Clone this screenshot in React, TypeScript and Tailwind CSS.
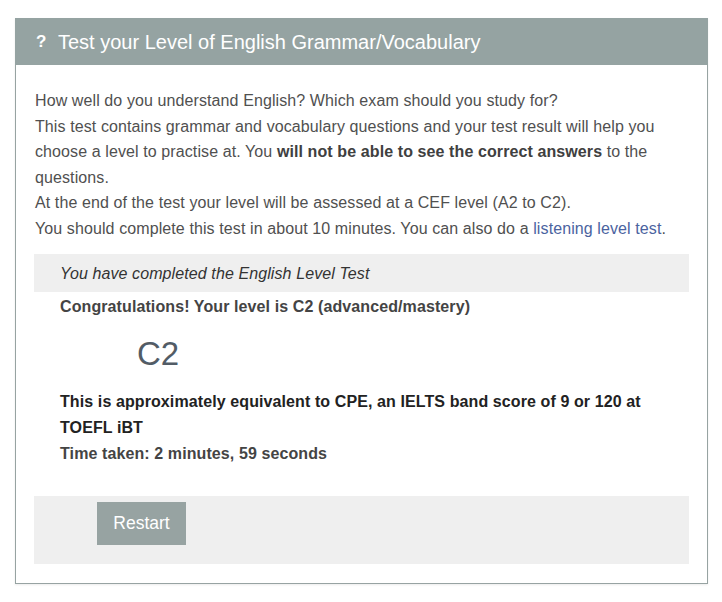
import React from "react";

export default function App() {
  return (
    <div className="min-h-[602px] bg-white pt-[18px] pl-[15px]" style={{ fontFamily: '"Liberation Sans", Arial, sans-serif' }}>
      <div className="w-[693px] border border-[#97a3a2] shadow-[0_1px_2px_rgba(0,0,0,0.08)]">
        <div className="h-[47px] bg-[#95a3a2] -mt-px -mx-px flex items-center pl-[21px] text-white">
          <span className="text-[17px] font-bold w-[22px]">?</span>
          <span className="text-[20px]">Test your Level of English Grammar/Vocabulary</span>
        </div>
        <div className="px-[18px] pt-[23px] pb-[19px] tracking-[0.1px]">
          <div className="text-[16px] leading-[25.6px] text-[#505050] pl-px">
            <p>How well do you understand English? Which exam should you study for?</p>
            <p>
              This test contains grammar and vocabulary questions and your test result will help you choose a level to practise at. You{" "}
              <b className="text-[#404040]">will not be able to see the correct answers</b> to the questions.
            </p>
            <p>At the end of the test your level will be assessed at a CEF level (A2 to C2).</p>
            <p>
              You should complete this test in about 10 minutes. You can also do a{" "}
              <a className="text-[#4b63a0]">listening level test</a>.
            </p>
          </div>
          <div className="mt-[12px] h-[38px] bg-[#efefef] flex items-center pl-[26px] pt-[2px] text-[16px] italic text-[#333]">
            You have completed the English Level Test
          </div>
          <div className="px-[26px] pt-[2px] text-[16px] leading-[26px]">
            <p className="font-bold text-[#444]">Congratulations! Your level is C2 (advanced/mastery)</p>
            <div className="h-[69px] flex items-center pl-[77px] text-[33px] tracking-normal text-[#525c66]">C2</div>
            <p className="font-bold text-[#222]">This is approximately equivalent to CPE, an IELTS band score of 9 or 120 at TOEFL iBT</p>
            <p className="font-bold text-[#444]">Time taken: 2 minutes, 59 seconds</p>
          </div>
          <div className="mt-[29px] h-[68px] bg-[#efefef] pt-[6px] pl-[63px]">
            <button className="w-[89px] h-[43px] bg-[#97a3a2] text-white text-[17.5px] tracking-normal pt-px">Restart</button>
          </div>
        </div>
      </div>
    </div>
  );
}
